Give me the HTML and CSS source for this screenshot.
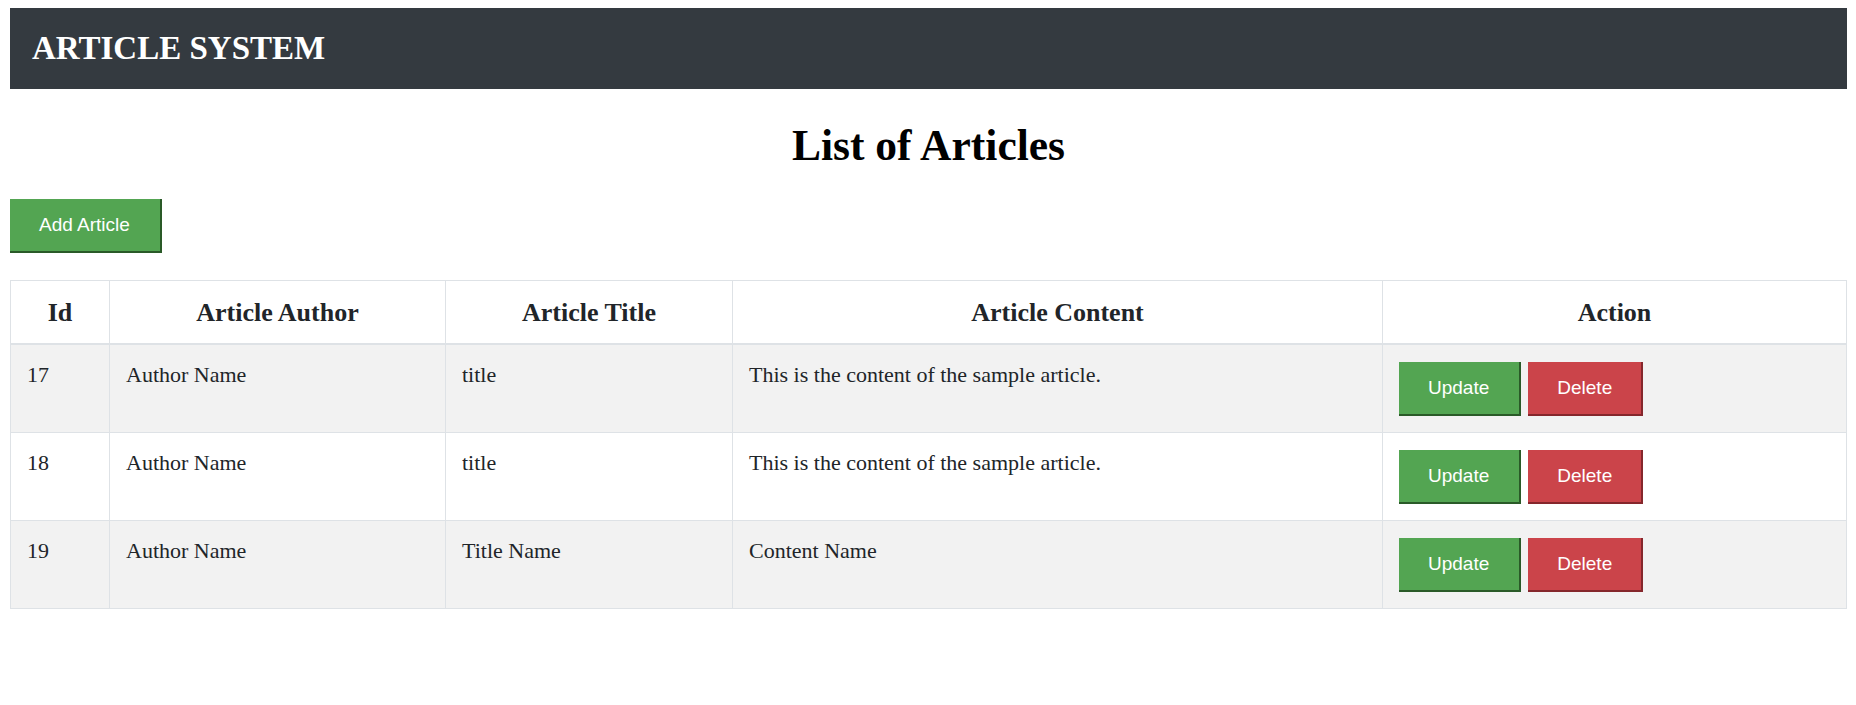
FILE: index.html
```html
<!DOCTYPE html>
<html lang="en">
<head>
<meta charset="utf-8">
<title>Article System</title>
<link rel="stylesheet" href="styles.css">
</head>
<body>
<header class="navbar">
  <span class="brand">ARTICLE SYSTEM</span>
</header>
<main>
  <h1 class="page-title">List of Articles</h1>
  <div class="toolbar">
    <button class="btn btn-green">Add Article</button>
  </div>
  <table class="articles">
    <colgroup>
      <col class="c-id">
      <col class="c-author">
      <col class="c-title">
      <col class="c-content">
      <col class="c-action">
    </colgroup>
    <thead>
      <tr>
        <th>Id</th>
        <th>Article Author</th>
        <th>Article Title</th>
        <th>Article Content</th>
        <th>Action</th>
      </tr>
    </thead>
    <tbody>
      <tr class="striped">
        <td>17</td>
        <td>Author Name</td>
        <td>title</td>
        <td>This is the content of the sample article.</td>
        <td><div class="actions"><button class="btn btn-green">Update</button><button class="btn btn-red">Delete</button></div></td>
      </tr>
      <tr>
        <td>18</td>
        <td>Author Name</td>
        <td>title</td>
        <td>This is the content of the sample article.</td>
        <td><div class="actions"><button class="btn btn-green">Update</button><button class="btn btn-red">Delete</button></div></td>
      </tr>
      <tr class="striped">
        <td>19</td>
        <td>Author Name</td>
        <td>Title Name</td>
        <td>Content Name</td>
        <td><div class="actions"><button class="btn btn-green">Update</button><button class="btn btn-red">Delete</button></div></td>
      </tr>
    </tbody>
  </table>
</main>
</body>
</html>
```

FILE: styles.css
```css
html, body {
  background: #ffffff;
}
body {
  margin: 8px 9px 8px 10px;
  font-family: "Liberation Serif", "Times New Roman", serif;
  color: #212529;
}
.navbar {
  height: 81px;
  background: #343a40;
  display: flex;
  align-items: center;
  padding: 0 22px;
  box-sizing: border-box;
}
.brand {
  color: #ffffff;
  font-size: 33px;
  font-weight: bold;
  line-height: 1;
}
.page-title {
  margin: 30px 0 28px;
  text-align: center;
  font-size: 43.5px;
  font-weight: bold;
  color: #000;
  line-height: 52px;
}
.toolbar {
  margin-bottom: 27px;
}
.btn {
  font-family: "Liberation Sans", Arial, sans-serif;
  font-size: 19px;
  color: #ffffff;
  border: none;
  border-radius: 0;
  padding: 15px 30px 15px 29px;
  line-height: 22px;
  cursor: pointer;
}
.btn-green {
  background: #53a552;
  border-right: 2px solid #2a5a28;
  border-bottom: 2px solid #2a5a28;
}
.btn-red {
  background: #cb444a;
  border-right: 2px solid #85272c;
  border-bottom: 2px solid #85272c;
}
.articles {
  width: 100%;
  border-collapse: collapse;
  table-layout: fixed;
  border: 1px solid #dee2e6;
}
.c-id { width: 99px; }
.c-author { width: 336px; }
.c-title { width: 287px; }
.c-content { width: 650px; }
.c-action { width: auto; }
.articles th,
.articles td {
  border: 1px solid #dee2e6;
  padding: 17px 16px 16px;
}
.articles th {
  font-size: 26px;
  font-weight: bold;
  text-align: center;
  border-bottom: 2px solid #dee2e6;
  line-height: 31px;
  padding: 16px 16px 15px;
}
.articles td {
  font-size: 22px;
  vertical-align: top;
  text-align: left;
  line-height: 26px;
}
.articles tr.striped td {
  background: #f2f2f2;
}
.actions {
  display: flex;
  gap: 7px;
}
.actions .btn-red {
  padding-left: 29px;
  padding-right: 29px;
}
```
